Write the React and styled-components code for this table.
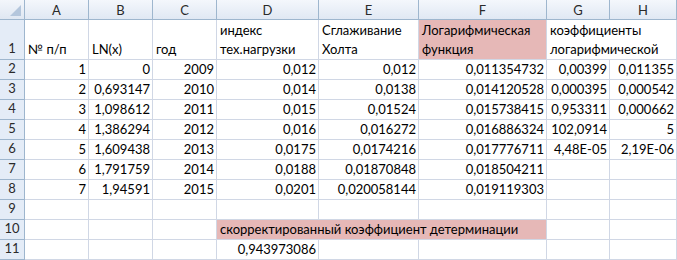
import React from 'react';
import styled, { createGlobalStyle } from 'styled-components';

const GlobalStyle = createGlobalStyle`
  html, body {
    margin: 0;
    padding: 0;
    background: #ffffff;
  }
  body {
    font-family: Lato, "Open Sans", "Liberation Sans", sans-serif;
  }
`;

const Sheet = styled.div`
  display: grid;
  grid-template-columns: 25px 64px 64px 64px 102px 100px 128px 63px 67px;
  grid-template-rows: 20px 40px repeat(10, 20px);
  width: 677px;
  height: 260px;
  overflow: hidden;
  background: #ffffff;
  font-size: 13px;
  color: #000000;
`;

const Corner = styled.div`
  position: relative;
  background: linear-gradient(#f3f6fb, #dfe7f2);
  border-right: 1px solid #9eb6ce;
  border-bottom: 1px solid #9eb6ce;

  &::after {
    content: '';
    position: absolute;
    right: 3px;
    bottom: 3px;
    border-style: solid;
    border-width: 0 0 11px 11px;
    border-color: transparent transparent #b4c6dc transparent;
  }
`;

const ColHead = styled.div`
  display: flex;
  align-items: center;
  justify-content: center;
  background: linear-gradient(#f4f7fc, #e0e8f3);
  border-right: 1px solid #9eb6ce;
  border-bottom: 1px solid #9eb6ce;
  color: #2a2a2a;
`;

const RowHead = styled.div`
  display: flex;
  align-items: flex-end;
  justify-content: center;
  padding-bottom: 1px;
  box-sizing: border-box;
  background: #e4ecf7;
  border-right: 1px solid #9eb6ce;
  border-bottom: 1px solid #9eb6ce;
  color: #2a2a2a;
  line-height: 19px;
`;

const Cell = styled.div`
  grid-column: span ${p => p.$span || 1};
  display: flex;
  flex-direction: column;
  justify-content: flex-end;
  align-items: ${p => (p.$right ? 'flex-end' : 'flex-start')};
  padding: 0 2px 0 3px;
  box-sizing: border-box;
  background: ${p => (p.$pink ? '#e6b8b7' : '#ffffff')};
  border-right: 1px solid #d0d7e5;
  border-bottom: 1px solid #d0d7e5;
  white-space: nowrap;
  overflow: hidden;
  line-height: 19px;
`;

const Line = styled.span`
  display: block;
`;

const columns = ['A', 'B', 'C', 'D', 'E', 'F', 'G', 'H'];

const data = [
  ['1', '0', '2009', '0,012', '0,012', '0,011354732', '0,00399', '0,011355'],
  ['2', '0,693147', '2010', '0,014', '0,0138', '0,014120528', '0,000395', '0,000542'],
  ['3', '1,098612', '2011', '0,015', '0,01524', '0,015738415', '0,953311', '0,000662'],
  ['4', '1,386294', '2012', '0,016', '0,016272', '0,016886324', '102,0914', '5'],
  ['5', '1,609438', '2013', '0,0175', '0,0174216', '0,017776711', '4,48E-05', '2,19E-06'],
  ['6', '1,791759', '2014', '0,0188', '0,01870848', '0,018504211', '', ''],
  ['7', '1,94591', '2015', '0,0201', '0,020058144', '0,019119303', '', ''],
];

function App() {
  return (
    <>
      <GlobalStyle />
      <Sheet>
        <Corner />
        {columns.map(c => (
          <ColHead key={c}>{c}</ColHead>
        ))}

        <RowHead>1</RowHead>
        <Cell>№ п/п</Cell>
        <Cell>LN(x)</Cell>
        <Cell>год</Cell>
        <Cell>
          <Line>индекс</Line>
          <Line>тех.нагрузки</Line>
        </Cell>
        <Cell>
          <Line>Сглаживание</Line>
          <Line>Холта</Line>
        </Cell>
        <Cell $pink>
          <Line>Логарифмическая</Line>
          <Line>функция</Line>
        </Cell>
        <Cell $span={2}>
          <Line>коэффициенты</Line>
          <Line>логарифмической</Line>
        </Cell>

        {data.map((row, i) => (
          <React.Fragment key={i}>
            <RowHead>{i + 2}</RowHead>
            {row.map((v, j) => (
              <Cell key={j} $right>{v}</Cell>
            ))}
          </React.Fragment>
        ))}

        <RowHead>9</RowHead>
        {columns.map(c => (
          <Cell key={c} />
        ))}

        <RowHead>10</RowHead>
        <Cell />
        <Cell />
        <Cell />
        <Cell $span={3} $pink>скорректированный коэффициент детерминации</Cell>
        <Cell />
        <Cell />

        <RowHead>11</RowHead>
        <Cell />
        <Cell />
        <Cell />
        <Cell $right>0,943973086</Cell>
        <Cell />
        <Cell />
        <Cell />
        <Cell />
      </Sheet>
    </>
  );
}

export default App;
